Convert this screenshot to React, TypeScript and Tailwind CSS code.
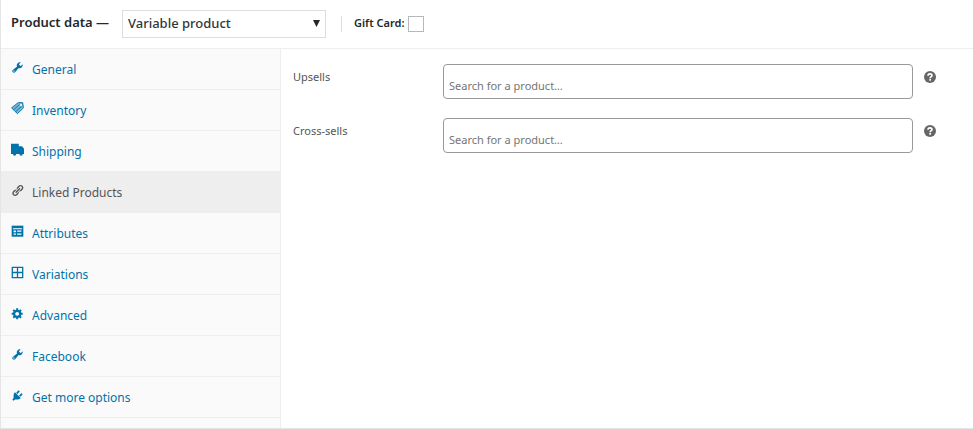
import type { ReactNode } from "react";

type Tab = { label: string; icon: ReactNode; active?: boolean };

const wrench = (
  <path
    fillRule="evenodd"
    d="M16.68 9.77c-1.34 1.34-3.3 1.67-4.95.99l-5.41 6.52c-.99.99-2.59.99-3.58 0s-.99-2.59 0-3.57l6.52-5.42c-.68-1.65-.35-3.61.99-4.95 1.28-1.28 3.12-1.62 4.72-1.06l-2.89 2.89 2.82 2.82 2.86-2.87c.53 1.58.18 3.39-1.08 4.65zM3.81 16.21c.4.39 1.04.39 1.43 0 .4-.4.4-1.04 0-1.43-.39-.4-1.03-.4-1.43 0-.39.39-.39 1.03 0 1.43z"
  />
);

const tabs: Tab[] = [
  { label: "General", icon: wrench },
  {
    label: "Inventory",
    icon: (
      <>
        <path d="M1 9 11 1h7l1 8-9 9z" opacity="0.5" />
        <path
          d="M1 9 11 1h7l1 8-9 9zM4 12l9-8M7 15l9-8"
          fill="none"
          stroke="currentColor"
          strokeWidth="1.5"
        />
        <circle cx="15.5" cy="4.5" r="1.5" fill="#fff" />
      </>
    ),
  },
  {
    label: "Shipping",
    icon: (
      <path d="M0 1h12v4h5l3 4v8h-2a2.500 2.500 0 0 1-5 0H8a2.500 2.500 0 0 1-5 0H0z" />
    ),
  },
  {
    label: "Linked Products",
    active: true,
    icon: (
      <path d="M17.74 2.76c1.68 1.69 1.68 4.41 0 6.1l-1.53 1.52c-1.12 1.12-2.7 1.47-4.14 1.09l2.62-2.61.76-.77.76-.76c.84-.84.84-2.2 0-3.04-.84-.85-2.2-.85-3.04 0l-.77.76-3.38 3.38c-.37-1.44-.02-3.02 1.1-4.14l1.52-1.53c1.69-1.68 4.42-1.68 6.1 0zM8.59 13.43l5.34-5.34c.42-.42.42-1.1 0-1.52-.44-.43-1.13-.39-1.53 0l-5.33 5.34c-.42.42-.42 1.1 0 1.52.44.43 1.13.39 1.52 0zm-.76 2.29l4.14-4.15c.38 1.44.03 3.02-1.09 4.14l-1.52 1.53c-1.69 1.68-4.41 1.68-6.1 0-1.68-1.68-1.68-4.42 0-6.1l1.53-1.52c1.12-1.12 2.7-1.47 4.14-1.1l-4.14 4.15c-.85.84-.85 2.2 0 3.05.84.84 2.2.84 3.04 0z" />
    ),
  },
  {
    label: "Attributes",
    icon: (
      <>
        <path d="M1 1h18v17H1z" />
        <path d="M3 5h14v1.500H3zM4 8.500h3.500v2.500H4zM9.500 8.500H16v2H9.500zM4 13h3.500v2H4zM9.500 13H16v2H9.500z" fill="#fff" />
      </>
    ),
  },
  {
    label: "Variations",
    icon: (
      <path
        fillRule="evenodd"
        d="M1 1h18v18H1zM3 3v6h6V3zM11 3v6h6V3zM3 11v6h6v-6zM11 11v6h6v-6z"
      />
    ),
  },
  {
    label: "Advanced",
    icon: (
      <path
        fillRule="evenodd"
        d="M18 12h-2.18c-.17.7-.44 1.35-.81 1.93l1.54 1.54-2.1 2.1-1.54-1.54c-.58.36-1.23.63-1.91.79V19H8v-2.18c-.68-.16-1.33-.43-1.91-.79l-1.54 1.54-2.12-2.12 1.54-1.54c-.36-.58-.63-1.23-.79-1.91H1V9.03h2.17c.16-.7.44-1.35.8-1.94L2.43 5.55l2.1-2.1 1.54 1.54c.58-.37 1.24-.64 1.93-.81V2h3v2.18c.68.16 1.33.43 1.91.79l1.54-1.54 2.12 2.12-1.54 1.54c.36.59.64 1.24.8 1.94H18V12zm-8.5 1.5c1.66 0 3-1.34 3-3s-1.34-3-3-3-3 1.34-3 3 1.34 3 3 3z"
      />
    ),
  },
  { label: "Facebook", icon: wrench },
  {
    label: "Get more options",
    icon: (
      <path d="M13.11 4.36L9.87 7.6 8 5.73l3.24-3.24c.35-.34 1.05-.2 1.56.32.52.51.66 1.21.31 1.55zm-8 1.77l.91-1.12 9.01 9.01-1.19.84c-.71.71-2.63 1.16-3.82 1.16H6.14L4.9 17.26c-.59.59-1.54.59-2.12 0-.59-.58-.59-1.53 0-2.12l1.24-1.24v-3.88c0-1.13.4-3.19 1.09-3.89zm7.26 3.97l3.24-3.24c.34-.35 1.04-.21 1.55.31.52.51.66 1.21.31 1.55l-3.24 3.25z" />
    ),
  },
];

function HelpTip() {
  return (
    <button type="button" aria-label="Help" className="mt-[7px] shrink-0 text-[#666]">
      <svg viewBox="0 0 12 12" className="block size-3" aria-hidden="true">
        <circle cx="6" cy="6" r="6" fill="currentColor" />
        <path
          d="M4 4.700C4 3.300 5 2.800 6 2.800s2 .6 2 1.700C8 5.700 6.200 5.600 6.200 7.200"
          fill="none"
          stroke="#fff"
          strokeWidth="1.700"
        />
        <rect x="5.300" y="8" width="1.700" height="1.700" fill="#fff" />
      </svg>
    </button>
  );
}

function ProductField({ id, label }: { id: string; label: string }) {
  return (
    <div className="flex items-start">
      <label htmlFor={id} className="w-[150px] shrink-0 pt-[3px] text-[11px] leading-5 text-[#555]">
        {label}
      </label>
      <input
        id={id}
        type="text"
        placeholder="Search for a product…"
        className="h-[35px] min-w-0 flex-1 rounded border border-[#999] bg-white px-[5px] pt-2 text-[11px] text-[#555] placeholder:text-[#757575]"
      />
      <div className="w-[60px] shrink-0 pl-[11px]">
        <HelpTip />
      </div>
    </div>
  );
}

export default function App() {
  return (
    <section className="border-b border-l border-[#e5e5e5] bg-white font-['Noto_Sans','Open_Sans',sans-serif] text-[#23282d]">
      <header className="flex h-[49px] items-center border-b border-[#eee] pl-[10px]">
        <label htmlFor="product-type" className="w-[111px] pb-1 text-[13px] font-semibold leading-5">
          Product data —
        </label>
        <div className="relative">
          <select
            id="product-type"
            className="block h-7 w-[204px] appearance-none border border-[#ddd] bg-white pl-[5px] text-[13px] font-medium text-[#32373c]"
          >
            <option>Variable product</option>
          </select>
          <svg viewBox="0 0 6 6" className="pointer-events-none absolute right-[6px] top-[10px] size-[7px]" aria-hidden="true">
            <path d="M0 0h6L3 6z" fill="#23282d" />
          </svg>
        </div>
        <div className="ml-[15px] flex h-4 items-center gap-1 border-l border-[#ddd] pl-3">
          <label htmlFor="gift-card" className="pb-px text-[11px] font-semibold">
            Gift Card:
          </label>
          <input id="gift-card" type="checkbox" className="size-4 appearance-none border border-[#b4b9be] bg-white" />
        </div>
      </header>
      <div className="flex">
        <nav className="w-[280px] shrink-0 border-r border-[#eee] bg-[#fafafa] pb-[10px]">
          <ul>
            {tabs.map((tab) => (
              <li key={tab.label}>
                <a
                  href="#"
                  aria-current={tab.active ? "page" : undefined}
                  className={
                    tab.active
                      ? "flex h-[41px] items-center gap-2 border-b border-[#eee] bg-[#eee] pl-[10px] pt-px text-xs text-[#555]"
                      : "flex h-[41px] items-center gap-2 border-b border-[#eee] pl-[10px] pt-px text-xs text-[#0073aa]"
                  }
                >
                  <svg viewBox="0 0 20 20" fill="currentColor" className="mb-1 size-[13px]" aria-hidden="true">
                    {tab.icon}
                  </svg>
                  {tab.label}
                </a>
              </li>
            ))}
          </ul>
        </nav>
        <div className="flex min-w-0 flex-1 flex-col gap-[19px] pl-3 pt-[15px]">
          <ProductField id="upsells" label="Upsells" />
          <ProductField id="cross-sells" label="Cross-sells" />
        </div>
      </div>
    </section>
  );
}
